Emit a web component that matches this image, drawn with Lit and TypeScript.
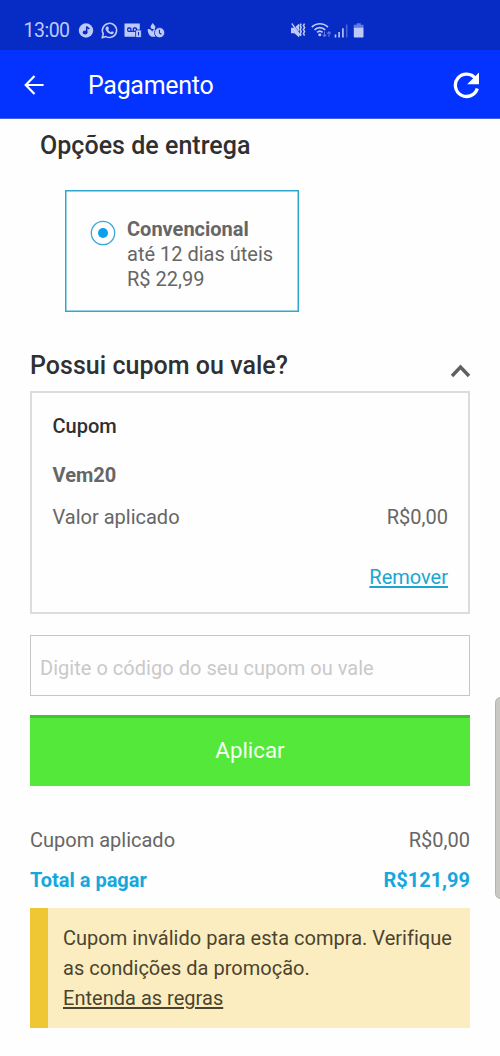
import { LitElement, html, css } from "lit";
import { customElement, state } from "lit/decorators.js";

@customElement("status-bar")
class StatusBar extends LitElement {
  static styles = css`
    :host { display: flex; box-sizing: border-box; height: 50px; padding: 11px 135px 0 23.500px; justify-content: space-between; background: #072bc5; color: #bdc9fa; }
    .group { display: flex; height: 40px; align-items: center; }
    .time { font-size: 19.500px; letter-spacing: -0.500px; line-height: 40px; width: 54px; }
    svg { display: block; }
  `;
  render() {
    return html`
      <div class="group">
        <span class="time">13:00</span>
        <svg width="90" height="20" viewBox="0 0 90 20" fill="currentColor">
          <circle cx="8" cy="9.500" r="7.200" />
          <ellipse cx="7.100" cy="11.500" rx="2.400" ry="2" fill="#072bc5" />
          <path d="M8.700 11.500V5.500c.5 1.300 1.500 1.600 2.700 2.400" fill="none" stroke="#072bc5" stroke-width="1.500" />
          <path d="M24.200 16.800l1.100-3.900a7.100 7.100 0 1 1 2.700 2.700z" fill="none" stroke="currentColor" stroke-width="1.600" stroke-linejoin="round" />
          <path d="M28.900 5.500l1.200.1.900 2-.8 1.200c.6 1.200 1.500 2 2.700 2.500l1-1.100 1.900.9c.2 1-.8 2.100-2.100 2.100-3.100 0-6.200-3.400-6.200-5.900 0-.8.7-1.700 1.400-1.800z" />
          <path d="M46.500 2.500h15.300v7h-4v6.300H46.500z" />
          <g fill="none" stroke="#072bc5" stroke-width="1.300">
            <rect x="49.700" y="7" width="3.200" height="3.300" rx="1" />
            <rect x="55.300" y="7" width="3.200" height="3.300" rx="1" />
            <path d="M52.500 10.300h3" />
          </g>
          <rect x="57.600" y="8.900" width="5.800" height="7.600" rx="1.200" stroke="#072bc5" stroke-width=".8" />
          <path d="M60.500 11v3.500" stroke="#072bc5" stroke-width="1" />
          <path d="M74.600 2l2.600 3.200c.5 1.100.1 2.100-.7 2.900h-2.600c-1-.7-1.600-1.900-1.200-3zM69.700 8c2.200-.3 3.900.9 4.500 2.700.5-1.500 1.500-2.500 3-2.700l.2 7.800h-2.400C71.800 15.800 69.500 12 69.700 8z" />
          <circle cx="81.600" cy="11.700" r="5.100" stroke="#072bc5" stroke-width=".8" />
          <path d="M81.400 8.700v3.300l2 1.300" fill="none" stroke="#072bc5" stroke-width="1.100" />
        </svg>
      </div>
      <div class="group">
        <svg width="75" height="20" viewBox="0 0 75 20" fill="currentColor">
          <path d="M1 6.800h3.400l4.800-4.300v14L4.400 12.200H1z" />
          <path d="M2.600 2.500l8 11" stroke="#072bc5" stroke-width=".8" />
          <path d="M1.800 2.500l8.700 12.300" stroke="currentColor" stroke-width="1.300" />
          <path d="M11.200 2.600l-1 2 1 2-1 2 1 2-1 2 1 2M14.600 2.600l-1.200 2 1.200 2-1.200 2 1.200 2-1.200 2 1.200 2" fill="none" stroke="currentColor" stroke-width="1.500" />
          <g fill="none" stroke="currentColor" stroke-width="1.700">
            <path d="M21.800 6.200c4.500-4.600 11.600-4.600 16.100 0" />
            <path d="M24.500 8.900c3-3 7.700-3 10.700 0" />
            <path d="M27.100 11.400c1.600-1.500 3.900-1.500 5.500 0" />
          </g>
          <circle cx="29.800" cy="13.800" r="1.500" />
          <g fill="none" stroke="currentColor" stroke-width="1.100" opacity=".5">
            <path d="M34.500 10.500v5M32.700 13.700l1.800 1.800 1.800-1.800M39 15.800v-5M37.200 12.600l1.800-1.800 1.800 1.800" />
          </g>
          <path d="M44.700 13.500h1.600v3h-1.600zM48.300 11h1.600v5.500h-1.600zM52.100 7.300h1.600v9.200h-1.600z" />
          <path d="M55.900 3.500h1.600v13h-1.600z" opacity=".35" />
          <path d="M66.700 2.300h4.100v1.500h2.700v2.700h-9.700V3.800h2.900z" opacity=".5" />
          <path d="M63.800 6.500h9.700v9.200q0 .8-.8.800h-8.100q-.8 0-.8-.8z" />
        </svg>
      </div>
    `;
  }
}

@customElement("app-header")
class AppHeader extends LitElement {
  static styles = css`
    :host { display: flex; box-sizing: border-box; height: 69px; padding: 1px 20px 0 24px; align-items: center; background: #0433ff; color: #fff; border-bottom: 1px solid #3f62e6; }
    .title { flex: 1; margin-left: 44px; padding-top: 3px; font-size: 25px; letter-spacing: -0.300px; line-height: 34px; }
    svg { display: block; }
  `;
  render() {
    return html`
      <svg width="20" height="20" viewBox="0 0 20 20" fill="none" stroke="currentColor" stroke-width="2.200"><path d="M19.600 10H2M10.500 1L1.700 10l8.800 9" /></svg>
      <span class="title">Pagamento</span>
      <svg width="28" height="28" viewBox="0 0 28 28"><path d="M23.500 7.500A11.200 11.200 0 1 0 25.300 17.500" fill="none" stroke="currentColor" stroke-width="3.300" /><path d="M27 1.500v11.700H15.200z" fill="currentColor" /></svg>
    `;
  }
}

@customElement("app-root")
class AppRoot extends LitElement {
  static styles = css`
    :host { display: block; position: relative; width: 500px; height: 1056px; overflow: hidden; background: #fefefe; font-family: Roboto, "Liberation Sans", sans-serif; font-size: 20px; color: #666; }
    * { box-sizing: border-box; }
    main { display: flex; flex-direction: column; padding: 11px 30px 0; }
    h2 { margin: 0; font-size: 25px; line-height: 32px; font-weight: 500; letter-spacing: 0.030px; color: #303032; }
    .delivery { padding-left: 10px; }
    .option { display: flex; gap: 11px; width: 234px; height: 122px; margin: 28px 0 0 35px; padding: 26px 0 0 24px; border: 1px solid #2da9cb; box-shadow: inset 0 0 0 0.500px #2da9cb; line-height: 25px; }
    .radio { display: block; margin-top: 3px; }
    .strong { font-weight: 700; }
    .couponhead { display: flex; justify-content: space-between; align-items: center; height: 32px; margin-top: 38px; }
    .chevron { margin-top: 10px; margin-right: -1px; }
    .coupon { height: 223px; margin-top: 9px; padding: 19px 20px 0 20.500px; border: 2px solid #dcdcdc; line-height: 28px; }
    .name { font-weight: 500; color: #303032; }
    .code { margin-top: 21px; font-weight: 700; }
    .row { display: flex; justify-content: space-between; }
    .value { margin-top: 14px; }
    .remove { display: flex; justify-content: flex-end; margin-top: 32px; }
    .link { color: #1ba6d1; text-decoration: underline; text-decoration-thickness: 1.500px; text-underline-offset: 2px; }
    .field { height: 61px; margin-top: 21px; padding: 4px 9px 0; border: 1px solid #c6c6c6; border-radius: 0; background: transparent; font: inherit; letter-spacing: 0.030px; color: #666; outline: none; }
    .field::placeholder { color: #c9c9c9; opacity: 1; }
    .apply { height: 71px; margin-top: 19px; padding: 0 0 4px; border: 0; border-top: 3px solid #43c532; background: #54e83a; color: #f4fff0; font: inherit; font-size: 22.300px; }
    .totals { display: flex; flex-direction: column; gap: 10px; margin-top: 39px; line-height: 30px; }
    .total { font-weight: 700; color: #16a7dc; }
    .alert { height: 120px; margin-top: 13px; padding: 15px 0 0 15px; border-left: 18px solid #efc734; background: #fbedc0; color: #4b442f; line-height: 30px; letter-spacing: 0.020px; white-space: nowrap; }
    .rules { text-decoration: underline; text-decoration-thickness: 1.500px; text-underline-offset: 2px; }
    .handle { position: absolute; top: 697px; right: -6px; width: 11px; height: 202px; border-radius: 6px; background: #cac8c3; border: 1px solid #b5b3af; }
    svg { display: block; }
  `;
  @state() private code = "";
  render() {
    return html`
      <status-bar></status-bar>
      <app-header></app-header>
      <main>
        <section class="delivery">
          <h2>Opções de entrega</h2>
        </section>
        <div class="option">
          <svg class="radio" width="26" height="26" viewBox="0 0 26 26"><circle cx="13" cy="13" r="11.700" fill="none" stroke="#38a9d2" stroke-width="1.300" /><circle cx="13" cy="13" r="5" fill="#0aa0ee" /></svg>
          <div><div class="strong">Convencional</div><div>até 12 dias úteis</div><div>R$ 22,99</div></div>
        </div>
        <div class="couponhead">
          <h2>Possui cupom ou vale?</h2>
          <svg class="chevron" width="20" height="14" viewBox="0 0 20 14" fill="none" stroke="#606060" stroke-width="3.400"><path d="M1 12L9.500 3l8.500 9" /></svg>
        </div>
        <section class="coupon">
          <div class="name">Cupom</div>
          <div class="code">Vem20</div>
          <div class="row value"><span>Valor aplicado</span><span>R$0,00</span></div>
          <div class="remove"><span class="link">Remover</span></div>
        </section>
        <input class="field" placeholder="Digite o código do seu cupom ou vale" .value=${this.code} @input=${(e: Event) => (this.code = (e.target as HTMLInputElement).value)} />
        <button class="apply">Aplicar</button>
        <div class="totals">
          <div class="row"><span>Cupom aplicado</span><span>R$0,00</span></div>
          <div class="row total"><span>Total a pagar</span><span>R$121,99</span></div>
        </div>
        <section class="alert">
          <div>Cupom inválido para esta compra. Verifique</div>
          <div>as condições da promoção.</div>
          <div><span class="rules">Entenda as regras</span></div>
        </section>
      </main>
      <div class="handle"></div>
    `;
  }
}
